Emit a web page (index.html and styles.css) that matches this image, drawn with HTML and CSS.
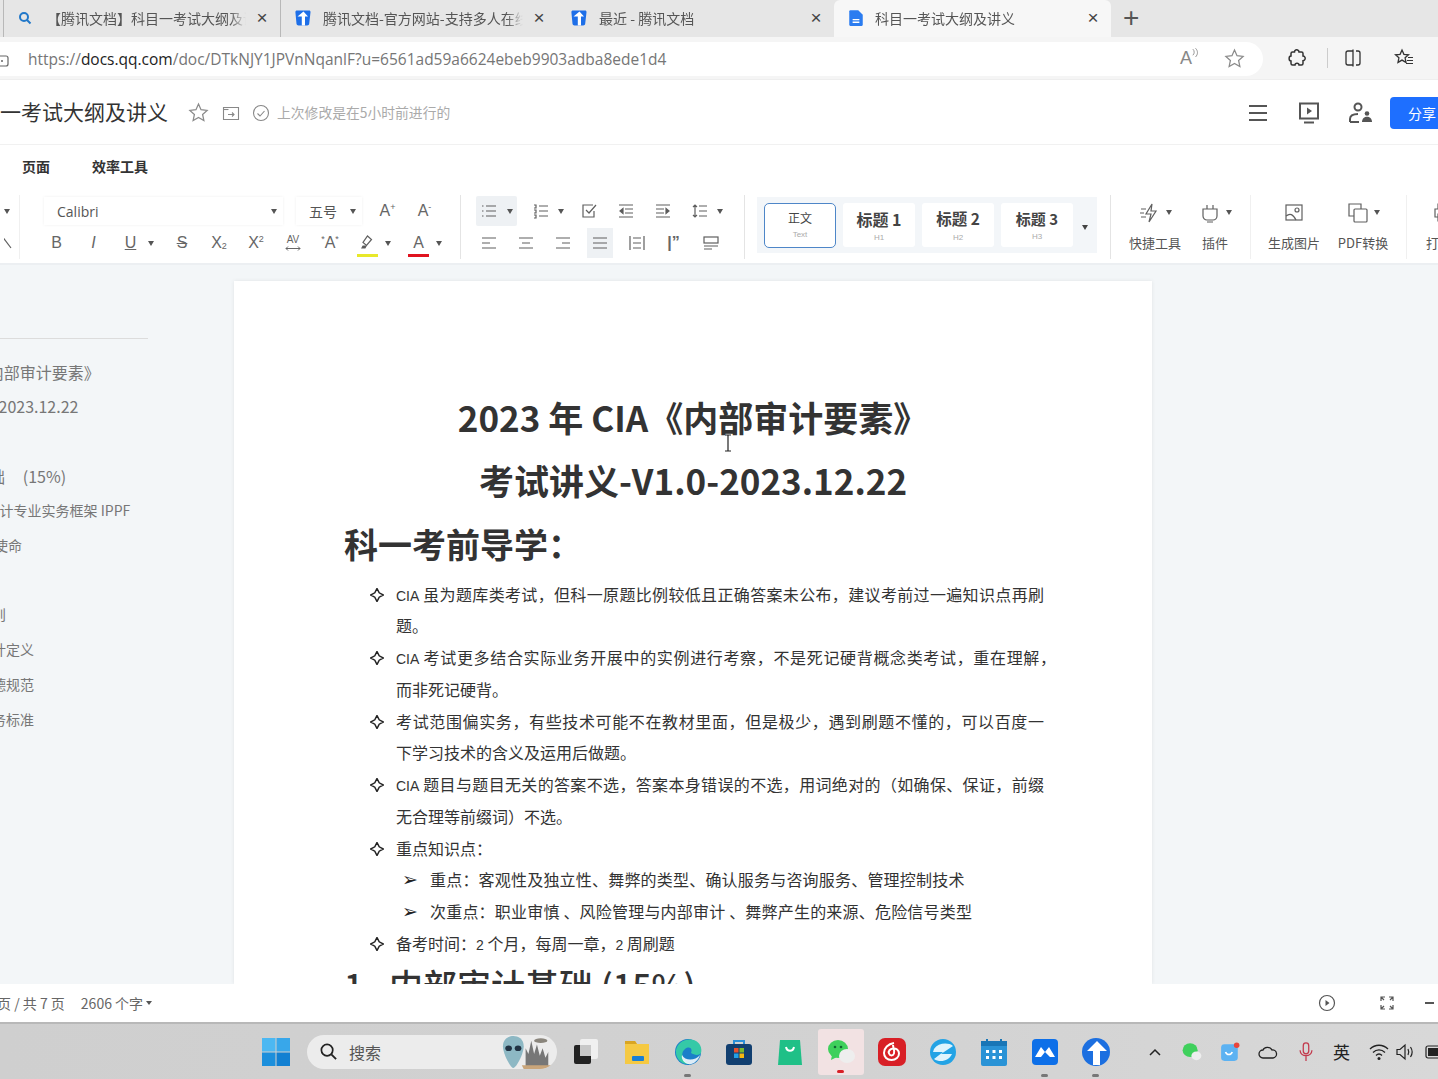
FILE: index.html
```html
<!DOCTYPE html>
<html lang="zh-CN">
<head>
<meta charset="utf-8">
<title>科目一考试大纲及讲义</title>
<link rel="stylesheet" href="styles.css">
</head>
<body>
<svg class="defs" width="0" height="0">
  <symbol id="tdoc" viewBox="0 0 18 18"><path d="M3 1.500h12c1 0 1.600.7 1.500 1.700l-1.300 11.600c-.1 1-1 1.700-2 1.700H4.500c-1 0-1.800-.7-2-1.700L1.400 3.200C1.300 2.200 2 1.500 3 1.500z" fill="#1e6fe8"/><path d="M9.500 2.500 14 7.500h-3v9H7.800V7.500H3.500z" fill="#fff"/></symbol>
  <symbol id="star" viewBox="0 0 20 20"><path d="m10 2 2.400 5.300 5.800.7-4.300 3.900 1.200 5.700-5.100-2.900-5.100 2.900 1.200-5.700L1.800 8l5.800-.7z" fill="none" stroke="currentColor" stroke-width="1.200"/></symbol>
  <symbol id="diamond" viewBox="0 0 14 14"><path d="M7 .5 9.200 4.800 13.500 7 9.200 9.200 7 13.500 4.800 9.200.5 7 4.800 4.800z" fill="none" stroke="#222" stroke-width="1.500"/></symbol>
</svg>

<header class="tabbar">
  <div class="tab first">
    <svg class="tab-ic" viewBox="0 0 16 16"><circle cx="7" cy="7" r="4" fill="none" stroke="#2278c9" stroke-width="2"/><path d="m10 10 3.500 3.500" stroke="#2278c9" stroke-width="2"/></svg>
    <span class="tab-title">【腾讯文档】科目一考试大纲及讲义</span><span class="tab-x">×</span>
  </div>
  <div class="tab">
    <svg class="tab-ic"><use href="#tdoc"/></svg>
    <span class="tab-title">腾讯文档-官方网站-支持多人在线协作</span><span class="tab-x">×</span>
  </div>
  <div class="tab plain">
    <svg class="tab-ic"><use href="#tdoc"/></svg>
    <span class="tab-title">最近 - 腾讯文档</span><span class="tab-x">×</span>
  </div>
  <div class="tab active">
    <svg class="tab-ic" viewBox="0 0 16 16"><path d="M3 1h7l4 4v9a1 1 0 0 1-1 1H3a1 1 0 0 1-1-1V2a1 1 0 0 1 1-1z" fill="#2b7cf0"/><path d="M5 9.500h6M5 11.800h6" stroke="#fff" stroke-width="1.200"/></svg>
    <span class="tab-title">科目一考试大纲及讲义</span><span class="tab-x">×</span>
  </div>
  <div class="tab-new">+</div>
</header>

<div class="addrbar">
  <div class="addr-pill">
    <svg class="lock" viewBox="0 0 12 16"><rect x="-4" y="5" width="12" height="10" rx="2" fill="none" stroke="#666" stroke-width="1.200"/><circle cx="2" cy="10" r="1" fill="#666"/></svg>
    <span class="url">https://<b>docs.qq.com</b>/doc/DTkNJY1JPVnNqanlF?u=6561ad59a6624ebeb9903adba8ede1d4</span>
    <span class="read">A<svg viewBox="0 0 8 12"><path d="M1 1c2 2 2 5 0 7M4 0c3 3 3 7 0 10" fill="none" stroke="#888"/></svg></span>
    <svg class="addr-star"><use href="#star"/></svg>
  </div>
  <div class="browser-tools">
    <svg class="bt" viewBox="0 0 20 20"><path d="M8 2.500c1.500-1.500 4-.5 4 1.500h2.500c1 0 1.500.8 1.500 1.500V8c2 0 3 2.500 1.500 4-.5.500-1 .7-1.500.7v2.800c0 .8-.7 1.500-1.500 1.500H12c0-2.500-4-2.500-4 0H5.500C4.700 17 4 16.300 4 15.500V13C1.500 13 1.500 8 4 8V5.500C4 4.700 4.700 4 5.500 4H7.500c0-.5.200-1 .5-1.500z" fill="none" stroke="#333" stroke-width="1.500"/></svg>
    <i class="bt-sep"></i>
    <svg class="bt" viewBox="0 0 20 20"><path d="M10 3H5a2 2 0 0 0-2 2v10a2 2 0 0 0 2 2h5M13 3h2a2 2 0 0 1 2 2v10a2 2 0 0 1-2 2h-2" fill="none" stroke="#333" stroke-width="1.300"/><path d="M10 1.500v17" stroke="#333" stroke-width="1.300"/></svg>
    <svg class="bt last" viewBox="0 0 20 20"><path d="m8 2 1.900 4.300 4.600.5-3.400 3 .9 4.600-4-2.300-4 2.300.9-4.600-3.400-3 4.600-.5z" fill="none" stroke="#333" stroke-width="1.300"/><path d="M14 9.500h5M13 12.500h6M12 15.500h7" stroke="#333" stroke-width="1.200"/></svg>
  </div>
</div>

<section class="dochead">
  <h1 class="doctitle">一考试大纲及讲义</h1>
  <svg class="dh-star"><use href="#star"/></svg>
  <svg class="dh-ic" viewBox="0 0 18 18"><path d="M1.500 3.500h15v12h-15z" fill="none" stroke="#888" stroke-width="1.100"/><path d="M1.500 5.500h5" stroke="#888" stroke-width="1.100"/><path d="M6 10.500h6m-2-2 2 2-2 2" fill="none" stroke="#888" stroke-width="1.100"/></svg>
  <svg class="dh-ic check" viewBox="0 0 18 18"><circle cx="9" cy="9" r="7.500" fill="none" stroke="#888" stroke-width="1.100"/><path d="m5.500 9.500 2.500 2.500 4.500-5" fill="none" stroke="#888" stroke-width="1.100"/></svg>
  <span class="saved">上次修改是在5小时前进行的</span>
  <div class="dh-right">
    <svg class="dr" viewBox="0 0 24 24"><path d="M3 5h18M3 12h18M3 19h18" stroke="#555" stroke-width="2.200"/></svg>
    <svg class="dr" viewBox="0 0 24 24"><rect x="3" y="2.500" width="18" height="15" fill="none" stroke="#555" stroke-width="2"/><path d="m10 6.500 5 3.500-5 3.500z" fill="#555"/><path d="M7 21.500h10" stroke="#555" stroke-width="2"/></svg>
    <svg class="dr" viewBox="0 0 24 24"><circle cx="10" cy="6" r="3.500" fill="none" stroke="#555" stroke-width="2"/><path d="M2 21v-3c0-3 3-5 8-5M2 21h9" fill="none" stroke="#555" stroke-width="2"/><circle cx="19" cy="12.500" r="2.300" fill="#555"/><path d="M14 21c0-7 10-7 10 0z" fill="#555"/></svg>
    <button class="share">分享</button>
  </div>
</section>

<nav class="menu"><span>页面</span><span>效率工具</span></nav>

<section class="toolbar">
  <div class="tb-group tb-cut">
    <div class="tb-row"><i class="arrow"></i></div>
    <div class="tb-row"><svg class="ic" viewBox="0 0 18 18"><path d="M-2 2 7 14"/></svg></div>
  </div>
  <div class="tb-group tb-font">
    <div class="tb-row">
      <div class="select font-sel">Calibri<i class="arrow"></i></div>
      <div class="select size-sel">五号<i class="arrow"></i></div>
      <span class="cell t first-a">A<sup>+</sup></span>
      <span class="cell t">A<sup>-</sup></span>
    </div>
    <div class="tb-row">
      <span class="cell t">B</span>
      <span class="cell t it">I</span>
      <span class="cell t ul">U</span><i class="arrow tight"></i>
      <span class="cell t st">S</span>
      <span class="cell t">X<sub>2</sub></span>
      <span class="cell t">X<sup>2</sup></span>
      <span class="cell t av">AV<svg class="av-arrow" viewBox="0 0 16 5"><path d="M1 2.500h14M3 .5l-2 2 2 2M13 .5l2 2-2 2" fill="none" stroke="#666"/></svg></span>
      <span class="cell t"><sup>*</sup>A<sup>*</sup></span>
      <span class="cell">
        <svg class="ic" viewBox="0 0 18 18"><path d="m9.500 2 4 3.500-5 6-3.500-3z"/><path d="m5 12 3 0-1 2H4z" fill="#555"/></svg>
        <i class="under yellow"></i>
      </span><i class="arrow tight"></i>
      <span class="cell t tc">A<i class="under red"></i></span><i class="arrow tight"></i>
    </div>
  </div>
  <div class="tb-group tb-para">
    <div class="tb-row">
      <span class="cell hl-wide"><svg class="ic" viewBox="0 0 18 18"><path d="M6 4h10M6 9h10M6 14h10M2 4h1.500M2 9h1.500M2 14h1.500"/></svg><i class="arrow"></i></span>
      <span class="cell"><svg class="ic" viewBox="0 0 18 18"><path d="M7 4h9M7 9h9M7 14h9M2 3h2v3H2M2 8h2v3H2M2 13h2v3H2"/></svg></span><i class="arrow tight"></i>
      <span class="cell"><svg class="ic" viewBox="0 0 18 18"><path d="M14 9v6H3V3h10"/><path d="m6 8 3 3 7-8"/></svg></span>
      <span class="cell"><svg class="ic" viewBox="0 0 18 18"><path d="M2 3h14M8 7h8M8 11h8M2 15h14"/><path d="M6 6.500 3 9l3 2.500z" fill="#555"/></svg></span>
      <span class="cell"><svg class="ic" viewBox="0 0 18 18"><path d="M2 3h14M2 7h8M2 11h8M2 15h14"/><path d="m12 6.500 3 2.500-3 2.500z" fill="#555"/></svg></span>
      <span class="cell"><svg class="ic" viewBox="0 0 18 18"><path d="M8 4h8M8 9h8M8 14h8M4 3v12M2 5l2-2 2 2M2 13l2 2 2-2"/></svg></span><i class="arrow tight"></i>
    </div>
    <div class="tb-row">
      <span class="cell"><svg class="ic" viewBox="0 0 18 18"><path d="M2 4h14M2 9h8M2 14h14"/></svg></span>
      <span class="cell"><svg class="ic" viewBox="0 0 18 18"><path d="M2 4h14M5 9h8M2 14h14"/></svg></span>
      <span class="cell"><svg class="ic" viewBox="0 0 18 18"><path d="M2 4h14M8 9h8M2 14h14"/></svg></span>
      <span class="cell hl"><svg class="ic" viewBox="0 0 18 18"><path d="M2 4h14M2 9h14M2 14h14"/></svg></span>
      <span class="cell"><svg class="ic" viewBox="0 0 18 18"><path d="M2 2v14M16 2v14M5 4h8M5 14h8M5 9h8"/></svg></span>
      <span class="cell quote">|”</span>
      <span class="cell"><svg class="ic" viewBox="0 0 18 18"><rect x="2" y="3" width="14" height="6"/><path d="M2 12h14M2 15h8"/></svg></span>
    </div>
  </div>
  <div class="styles">
    <div class="style-card sel"><b class="n">正文</b><small>Text</small></div>
    <div class="style-card"><b>标题 1</b><small>H1</small></div>
    <div class="style-card"><b class="h2">标题 2</b><small>H2</small></div>
    <div class="style-card"><b class="h3">标题 3</b><small>H3</small></div>
    <i class="arrow dark"></i>
  </div>
  <div class="tools">
    <div class="tool w-quick"><div class="tool-ic"><svg class="ic big" viewBox="0 0 22 22"><path d="M13 2 7 12h5l-2 8 7-11h-5z"/><path d="M2 7h5M1 11h4M2 15h5"/></svg><i class="arrow"></i></div><span>快捷工具</span></div>
    <div class="tool w-plug"><div class="tool-ic"><svg class="ic big" viewBox="0 0 22 22"><path d="M4 7h14v7a4 4 0 0 1-4 4H8a4 4 0 0 1-4-4zM8 3v4M14 3v4M8 20h6"/></svg><i class="arrow"></i></div><span>插件</span></div>
    <i class="tool-sep"></i>
    <div class="tool w-img"><div class="tool-ic"><svg class="ic big" viewBox="0 0 22 22"><rect x="3" y="3" width="16" height="15"/><circle cx="14" cy="8" r="2"/><path d="M3 14c4-3 7-2 10 4"/></svg></div><span>生成图片</span></div>
    <div class="tool w-pdf"><div class="tool-ic"><svg class="ic big" viewBox="0 0 22 22"><path d="M7 14H2V2h12v5"/><rect x="7" y="7" width="13" height="13" rx="1"/></svg><i class="arrow"></i></div><span>PDF转换</span></div>
    <i class="tool-sep"></i>
    <div class="tool w-print"><div class="tool-ic"><svg class="ic big" viewBox="0 0 22 22"><path d="M6 7V2h10v5M6 15H3V7h16v8h-3M6 12h10v7H6z"/></svg></div><span>打印</span></div>
  </div>
</section>

<main class="workspace">
  <aside class="outline">
    <p class="l1">2023年 CIA《内部审计要素》</p>
    <p class="l1">考试讲义-V1.0-2023.12.22</p>
    <p class="l1">科一考前导学：</p>
    <p class="l1">1. 内部审计基础&nbsp;&nbsp;&nbsp;&nbsp;&nbsp;(15%)</p>
    <p class="l2">1.1 内部审计专业实务框架 IPPF</p>
    <p class="l3">内部审计使命</p>
    <p class="l4">1.2</p>
    <p class="l4">基本原则</p>
    <p class="l4">内部审计定义</p>
    <p class="l4">职业道德规范</p>
    <p class="l4">内部实务标准</p>
  </aside>
  <article class="page">
    <h1 class="t-center">2023 年 CIA《内部审计要素》</h1>
    <h1 class="t-center">考试讲义-V1.0-2023.12.22</h1>
    <h1 class="t-left">科一考前导学：</h1>
    <ul class="points">
      <li><svg class="bul"><use href="#diamond"/></svg><div><span class="ln"><span class="lat">CIA</span> 虽为题库类考试，但科一原题比例较低且正确答案未公布，建议考前过一遍知识点再刷</span>题。</div></li>
      <li><svg class="bul"><use href="#diamond"/></svg><div><span class="ln hang"><span class="lat">CIA</span> 考试更多结合实际业务开展中的实例进行考察，不是死记硬背概念类考试，重在理解，</span>而非死记硬背。</div></li>
      <li><svg class="bul"><use href="#diamond"/></svg><div><span class="ln">考试范围偏实务，有些技术可能不在教材里面，但是极少，遇到刷题不懂的，可以百度一</span>下学习技术的含义及运用后做题。</div></li>
      <li><svg class="bul"><use href="#diamond"/></svg><div><span class="ln"><span class="lat">CIA</span> 题目与题目无关的答案不选，答案本身错误的不选，用词绝对的（如确保、保证，前缀</span>无合理等前缀词）不选。</div></li>
      <li><svg class="bul"><use href="#diamond"/></svg><div>重点知识点：</div></li>
      <li class="sub"><span class="arr">➢</span><div>重点：客观性及独立性、舞弊的类型、确认服务与咨询服务、管理控制技术</div></li>
      <li class="sub"><span class="arr">➢</span><div>次重点：职业审慎 、风险管理与内部审计 、舞弊产生的来源、危险信号类型</div></li>
      <li><svg class="bul"><use href="#diamond"/></svg><div>备考时间：<span class="lat">2</span> 个月，每周一章，<span class="lat">2</span> 周刷题</div></li>
    </ul>
    <h2 class="sec"><span class="sec-no">1</span>内部审计基础 (15%)</h2>
  </article>
  <svg class="ibeam" viewBox="0 0 10 18"><path d="M2 1h6M5 1v16M2 17h6" fill="none" stroke="#222" stroke-width="1.200"/></svg>
</main>

<footer class="status">
  <span class="pg">第 1 页 / 共 7 页</span>
  <span class="wc">2606 个字<i class="arrow small"></i></span>
  <div class="st-right">
    <svg class="st-ic" viewBox="0 0 18 18"><circle cx="9" cy="9" r="7.500" fill="none" stroke="#555" stroke-width="1.200"/><path d="m7.500 6 4 3-4 3z" fill="#555"/></svg>
    <svg class="st-ic" viewBox="0 0 18 18"><path d="M3 7V3h4M3 3l3 3M15 7V3h-4M15 3l-3 3M3 11v4h4M3 15l3-3M15 11v4h-4M15 15l-3-3" fill="none" stroke="#555" stroke-width="1.200"/></svg>
    <span class="minus"></span>
  </div>
</footer>

<div class="taskbar">
  <div class="tk-apps">
    <span class="tk"><svg class="tki" viewBox="0 0 28 28"><rect width="13.500" height="13.500" fill="#4cb8f2"/><rect x="14.500" width="13.500" height="13.500" fill="#38a7ea"/><rect y="14.500" width="13.500" height="13.500" fill="#1c8fdc"/><rect x="14.500" y="14.500" width="13.500" height="13.500" fill="#1280d2"/></svg></span>
    <div class="search">
      <svg class="s-ic" viewBox="0 0 20 20"><circle cx="8.500" cy="8.500" r="6" fill="none" stroke="#222" stroke-width="1.800"/><path d="m13 13 5 5" stroke="#222" stroke-width="2"/></svg>
      <span>搜索</span>
      <svg class="alien" viewBox="0 0 56 36"><path d="M26 34V14l3 6 3-14 3 14 3-10 3 12 3-8 3 10 3-6v16z" fill="#777"/><path d="M22 32h32c-3 3-6 4-10 4H24z" fill="#c9a57a"/><ellipse cx="42" cy="6" rx="7" ry="2.500" fill="#8a857c"/><path d="M2 12C2 4 8 1 13 1s11 3 11 11c0 8-8 23-11 23S2 20 2 12z" fill="#8db8c4"/><ellipse cx="8" cy="14" rx="3.500" ry="3" fill="#234"/><ellipse cx="18" cy="14" rx="3.500" ry="3" fill="#234"/></svg>
    </div>
    <span class="tk"><svg class="tki" viewBox="0 0 28 28"><rect x="8" y="1" width="18" height="20" rx="2" fill="#f0f0f0"/><rect x="2" y="7" width="17" height="19" rx="2" fill="#222"/><rect x="8" y="7" width="11" height="11" fill="#c8c8c8"/></svg></span>
    <span class="tk"><svg class="tki" viewBox="0 0 28 28"><path d="M2 3h10l2 3h12v20H2z" fill="#f5c943"/><path d="M2 3h10l2 3H2z" fill="#d9a522"/><rect x="9" y="18" width="12" height="5" rx="1" fill="#1a7fd4"/></svg></span>
    <span class="tk dot"><svg class="tki" viewBox="0 0 28 28"><circle cx="14" cy="14" r="13" fill="#1b7fc9"/><path d="M2 12C4 3 14-1 22 3c5 3 6 8 5 12-2 3-7 2-10 0 2-5-2-7-6-4-5 4-3 12 5 15C7 27 1 20 2 12z" fill="#35c9a7"/><path d="M26 17c-2 6-7 10-12 9-4-1-7-5-6-9 3 6 13 6 18 0z" fill="#fff" opacity=".85"/></svg></span>
    <span class="tk"><svg class="tki" viewBox="0 0 28 28"><path d="M9 6V3h10v3" fill="none" stroke="#2b8fd8" stroke-width="2"/><rect x="1" y="6" width="26" height="21" rx="3" fill="#123f70"/><rect x="9" y="10" width="4.500" height="4.500" fill="#e8502c"/><rect x="14.500" y="10" width="4.500" height="4.500" fill="#7cb92e"/><rect x="9" y="15.500" width="4.500" height="4.500" fill="#22a0e6"/><rect x="14.500" y="15.500" width="4.500" height="4.500" fill="#f7b80f"/></svg></span>
    <span class="tk"><svg class="tki" viewBox="0 0 28 28"><path d="M4 2h20l2 25H2z" fill="#1fc087"/><path d="M10 9c1 5 7 5 8 0" fill="none" stroke="#fff" stroke-width="2"/></svg></span>
    <span class="tk wechat"><svg class="tki" viewBox="0 0 28 28"><ellipse cx="11" cy="11" rx="10" ry="9" fill="#3fd05c"/><path d="m5 17-1 5 6-3z" fill="#3fd05c"/><ellipse cx="20" cy="18" rx="8" ry="7" fill="#eee"/><circle cx="8" cy="9" r="1.300" fill="#163"/><circle cx="14" cy="9" r="1.300" fill="#163"/></svg></span>
    <span class="tk"><svg class="tki" viewBox="0 0 28 28"><rect x="0" y="0" width="28" height="28" rx="7" fill="#d81f26"/><path d="M16 5c-6 1-10 5-10 10 0 4 3 7 7.500 7s7.500-3 7.500-6.500S18 10 15 10.500 10 13 11 15.500 15 18 16 15.500 15 9 15 7" fill="none" stroke="#fff" stroke-width="2"/></svg></span>
    <span class="tk"><svg class="tki" viewBox="0 0 28 28"><circle cx="14" cy="14" r="13" fill="#23a3e5"/><path d="M5 11c4-6 14-7 19-3l-12 8h11c-3 7-12 9-18 5l9-7H4z" fill="#dff4fd"/></svg></span>
    <span class="tk"><svg class="tki" viewBox="0 0 28 28"><rect x="1" y="3" width="26" height="25" rx="2" fill="#2a93d6"/><rect x="1" y="3" width="26" height="5" fill="#1976b6"/><path d="M7 1v5M21 1v5" stroke="#1976b6" stroke-width="2"/><path d="M6 12h3v3H6zM12.500 12h3v3h-3zM19 12h3v3h-3zM6 18h3v3H6zM12.500 18h3v3h-3zM19 18h3v3h-3z" fill="#fff"/></svg></span>
    <span class="tk dot"><svg class="tki" viewBox="0 0 28 28"><rect x="1" y="1" width="26" height="26" rx="4" fill="#0d6fe8"/><path d="M4 19 10 9l4 5 4-5 6 10h-5l-5-5-4 5z" fill="#fff"/></svg></span>
    <span class="tk dot"><svg class="tki" viewBox="0 0 28 28"><circle cx="14" cy="14" r="14" fill="#1c6fe0"/><path d="M15 3 25 13h-7v14h-7V13H5z" fill="#fff"/></svg></span>
  </div>
  <div class="tray">
    <svg class="tr chev" viewBox="0 0 14 14"><path d="m2 10 5-5 5 5" fill="none" stroke="#222" stroke-width="1.500"/></svg>
    <svg class="tr" viewBox="0 0 16 16"><ellipse cx="6.500" cy="6.500" rx="6" ry="5.500" fill="#3fd05c"/><ellipse cx="11.500" cy="11" rx="4" ry="3.500" fill="#eee"/></svg>
    <svg class="tr" viewBox="0 0 18 18"><rect x="1" y="2" width="15" height="15" rx="3" fill="#5cb2f2"/><path d="M5 9c1 3 5 3 6 0" fill="none" stroke="#fff" stroke-width="1.500"/><circle cx="15" cy="3" r="2.500" fill="#e8453c"/></svg>
    <svg class="tr" viewBox="0 0 20 20"><path d="M5 16a4 4 0 0 1 0-8c1-3 7-4 9 0a4 4 0 0 1 1 8z" fill="none" stroke="#222" stroke-width="1.300"/></svg>
    <svg class="tr" viewBox="0 0 18 22"><rect x="6" y="1" width="6" height="12" rx="3" fill="none" stroke="#c33a4d" stroke-width="1.400"/><path d="M2.500 9c0 8 13 8 13 0M9 15v6" fill="none" stroke="#c33a4d" stroke-width="1.400"/></svg>
    <span class="ime">英</span>
    <svg class="tr" viewBox="0 0 20 20"><path d="M1 7c5-5 13-5 18 0M4 10.500c3.500-3.500 8.500-3.500 12 0M7 13.500c2-2 4-2 6 0" fill="none" stroke="#222" stroke-width="1.300"/><circle cx="10" cy="16.500" r="1.500" fill="#222"/></svg>
    <svg class="tr" viewBox="0 0 20 20"><path d="M2 7.500h3L10 3v14l-5-4.500H2z" fill="none" stroke="#222" stroke-width="1.200"/><path d="M13 7c1 2 1 4 0 6M15.500 5c2 3 2 7 0 10" fill="none" stroke="#222" stroke-width="1.200"/></svg>
    <svg class="tr batt" viewBox="0 0 20 14"><rect x="1" y="1" width="18" height="12" rx="2" fill="none" stroke="#222" stroke-width="1.200"/><rect x="3" y="3" width="14" height="8" fill="#222"/></svg>
  </div>
</div>
</body>
</html>
```

FILE: styles.css
```css
* { box-sizing: border-box; }
html, body { margin: 0; height: 100%; }
body {
  width: 1438px; height: 1079px; overflow: hidden;
  display: flex; flex-direction: column;
  font-family: "Noto Sans CJK SC", "Noto Sans", sans-serif;
  color: #333; background: #fff;
}
.defs { position: absolute; }

/* tabs */
.tabbar { flex: 0 0 37px; display: flex; align-items: stretch; background: #e6e6e6; padding-left: 3px; }
.tab { width: 277px; display: flex; align-items: center; padding: 0 9px 2px 13px; border-left: 1px solid #b8b8b8; font-size: 14px; color: #555; }
.tab.first .tab-ic { margin-left: 0; margin-right: 14px; width: 16px; height: 16px; }
.tab.first { padding-left: 13px; }
.tab.plain { border-left-color: transparent; padding-left: 12px; }
.tab.active { background: #f7f7f7; border-left: 0; border-radius: 6px 6px 0 0; padding-left: 13px; }
.tab-ic { width: 18px; height: 18px; margin: 0 11px 0 0; flex: none; }
.tab.active .tab-ic { margin-right: 10px; }
.tab-title { flex: 1; min-width: 0; white-space: nowrap; overflow: hidden; -webkit-mask-image: linear-gradient(90deg, #000 92%, transparent); mask-image: linear-gradient(90deg, #000 92%, transparent); }
.tab-x { font-family: "Liberation Sans", sans-serif; font-size: 19px; width: 18px; text-align: center; color: #444; margin-left: 7px; }
.tab-new { font-family: "Liberation Sans", sans-serif; font-size: 28px; font-weight: 300; color: #555; margin-left: 12px; line-height: 36px; }

/* address */
.addrbar { flex: 0 0 43px; display: flex; align-items: center; background: #f5f5f5; border-bottom: 1px solid #eee; }
.addr-pill { width: 1263px; height: 34px; margin-top: 1px; background: #fff; border-radius: 0 17px 17px 0; display: flex; align-items: center; }
.lock { width: 12px; height: 16px; margin-right: 16px; }
.url { font-family: "Open Sans", sans-serif; font-size: 15.500px; color: #767676; flex: 1; white-space: nowrap; }
.url b { font-weight: 400; color: #222; }
.read { font-family: "Liberation Sans", sans-serif; font-size: 18px; color: #888; display: flex; margin-right: 25px; }
.read svg { width: 7px; height: 11px; }
.addr-star { width: 21px; height: 21px; color: #8a8a8a; margin-right: 18px; }
.browser-tools { flex: 1; display: flex; align-items: center; padding-left: 24px; }
.bt { width: 20px; height: 20px; }
.bt-sep { width: 1px; height: 20px; background: #ccc; margin: 0 15px 0 20px; }
.bt.last { margin-left: 31px; }

/* doc head */
.dochead { flex: 0 0 65px; display: flex; align-items: center; padding: 1px 0 0 0; background: #fff; border-bottom: 1px solid #f1f1f1; }
.doctitle { margin: -3px 0 0; font-size: 21px; font-weight: 400; color: #333; white-space: nowrap; width: 188px; flex: none; }
.dh-star { width: 21px; height: 21px; color: #8a8a8a; }
.dh-ic { width: 18px; height: 18px; margin-left: 13px; }
.dh-ic.check { margin-left: 12px; }
.saved { font-size: 13.800px; color: #aaa; margin: -2px 0 0 7px; white-space: nowrap; }
.dh-right { margin-left: auto; display: flex; align-items: center; }
.dr { width: 24px; height: 24px; margin-right: 27px; }
.dr:last-of-type { margin-right: 18px; }
.share { width: 58px; height: 32px; margin-right: -10px; padding: 0 12px 0 0; background: #1e6fff; border: 0; border-radius: 4px; color: #fff; font: 14px "Noto Sans CJK SC", sans-serif; text-align: right; }

/* menu */
.menu { flex: 0 0 42px; display: flex; align-items: center; padding-left: 22px; gap: 42px; font-size: 14px; font-weight: 700; color: #333; background: #fff; }

/* toolbar */
.toolbar { flex: 0 0 78px; display: flex; align-items: flex-start; background: #fff; padding-top: 8px; border-bottom: 2px solid #eceff2; }
.tb-group { display: flex; flex-direction: column; height: 64px; flex: none; }
.tb-row { height: 32px; display: flex; align-items: center; }
.tb-cut { width: 20px; padding-left: 4px; border-right: 1px solid #f0f0f0; }
.tb-font { width: 441px; padding-left: 18px; border-right: 1px solid #e4e4e4; }
.tb-font .tb-row:first-child { padding-left: 6px; }
.tb-para { width: 284px; padding-left: 9px; border-right: 1px solid #e4e4e4; }
.select { height: 28px; flex: none; display: flex; align-items: center; justify-content: space-between; font-size: 14px; color: #555; box-shadow: 0 0 3px #f0f0f0; padding: 0 6px 0 13px; }
.font-sel { width: 239px; font-family: "Open Sans", sans-serif; }
.size-sel { width: 66px; margin-left: 13px; }
.cell { width: 37px; height: 30px; flex: none; display: inline-flex; align-items: center; justify-content: center; position: relative; color: #666; }
.t { font-family: "Liberation Sans", sans-serif; font-size: 16px; }
.t sup, .t sub { font-size: 9px; line-height: 1; }
.t sup { align-self: flex-start; margin-top: 7px; }
.t sub { align-self: flex-end; margin-bottom: 7px; }
.first-a { margin-left: 7px; }
.it { font-style: italic; }
.ul { text-decoration: underline; }
.st { text-decoration: line-through; }
.av { font-size: 10px; flex-direction: column; line-height: 1; }
.av-arrow { width: 16px; height: 5px; margin-top: 1px; }
.hl { background: #eef1f4; width: 26px; margin: 0 5.500px; }
.hl-wide { background: #eef1f4; border-radius: 2px; width: 41px; margin: 0 5.500px 0 6px; padding-left: 4px; justify-content: flex-start; gap: 8.500px; }
.under { position: absolute; left: 8px; right: 8px; bottom: 1px; height: 3px; }
.under.yellow { background: #e8e82a; }
.under.red { background: #e0131f; }
.quote { font-family: "Liberation Sans", sans-serif; font-size: 16px; font-weight: 700; }
.ic { width: 18px; height: 18px; flex: none; fill: none; stroke: #5f5f5f; stroke-width: 1.200; overflow: hidden; }
.ic.big { width: 22px; height: 22px; }
.arrow { display: inline-block; width: 0; height: 0; border-left: 3.500px solid transparent; border-right: 3.500px solid transparent; border-top: 5px solid #555; flex: none; }
.arrow.tight { margin: 0 9.500px 0 -1px; }
.tb-para .arrow.tight { margin: 0 7px 0 -2px; }
.arrow.small { margin-left: 3px; border-top-width: 4px; border-left-width: 3px; border-right-width: 3px; }
.arrow.dark { border-top-color: #444; align-self: center; margin: -2px 0 0 2px; }

/* style cards */
.styles { width: 340px; height: 56px; flex: none; margin: 2px 0 0 12px; padding: 6px 0 0 7px; background: #f3f6f9; display: flex; align-items: flex-start; gap: 7px; }
.style-card { width: 72px; height: 44px; background: #fff; border-radius: 3px; display: flex; flex-direction: column; align-items: center; padding-top: 8px; line-height: 1; }
.style-card.sel { height: 45px; border: 1px solid #4e86c8; border-radius: 5px; }
.style-card b { font-size: 16px; font-weight: 700; color: #444; white-space: nowrap; }
.style-card b.h2 { font-size: 15.500px; }
.style-card b.h3 { font-size: 15px; }
.style-card b.n { font-size: 12px; font-weight: 400; }
.style-card small { font: 8px "Liberation Sans", sans-serif; color: #aaa; margin-top: 6px; }

/* tools */
.tools { flex: 1; min-width: 0; display: flex; margin-left: 13px; height: 64px; border-left: 1px solid #e4e4e4; }
.tool { display: flex; flex-direction: column; align-items: center; font-size: 13px; color: #555; white-space: nowrap; flex: none; }
.tool-ic { height: 32px; padding-top: 3px; display: flex; align-items: center; gap: 5px; }
.tool span { line-height: 32px; }
.w-quick { width: 76px; margin-left: 6px; }
.w-plug { width: 44px; }
.tool-sep { width: 1px; background: #f0f0f0; margin: 0 0 0 13px; flex: none; }
.w-img { width: 58px; margin-left: 14px; }
.w-pdf { width: 60px; margin-left: 10px; }
.w-print { width: 26px; margin-left: 19px; align-items: flex-start; }
.w-print .tool-ic { margin-left: 6px; }

/* workspace */
.workspace { flex: 1; min-height: 0; background: #f3f6f8; display: flex; overflow: hidden; position: relative; }
.outline { width: 234px; flex: none; padding-top: 89.500px; position: relative; font-size: 14px; color: #777; overflow: hidden; }
.outline::before { content: ""; position: absolute; left: 0; top: 73px; width: 148px; height: 1px; background: #dcdcdc; }
.outline p { margin: 0 0 0 -108px; line-height: 34.700px; white-space: nowrap; }
.outline .l1 { font-size: 16px; }
.outline .l2 { padding-left: 43px; }
.outline .l3 { padding-left: 46px; }
.outline .l4 { padding-left: 58px; }
.page { width: 918px; flex: none; margin-top: 16px; padding: 104px 110px 0; background: #fff; box-shadow: 0 0 4px rgba(0,0,0,.08); color: #333; }
.page h1 { margin: 0; font-size: 34px; font-weight: 700; line-height: 63px; white-space: nowrap; }
.page h1.t-center { font-size: 35px; text-align: center; }
.page h1.t-left { margin-top: 1px; }
.points { list-style: none; margin: 3.500px -20px 0 0; padding: 0 0 0 26px; font-size: 16px; line-height: 31.750px; }
.points li { display: flex; }
.ln { display: block; width: 648px; text-align: justify; text-align-last: justify; white-space: nowrap; }
.ln.hang { width: 660px; }
.lat { font-family: "Liberation Sans", sans-serif; font-size: 14px; line-height: 1; }
.bul { width: 14px; height: 14px; margin: 9px 12px 0 0; flex: none; }
.points li.sub { padding-left: 32px; letter-spacing: .2px; }
.arr { font-family: "DejaVu Sans", sans-serif; font-size: 19px; line-height: 31.750px; height: 31.750px; width: 28px; flex: none; color: #222; }
.sec { margin: -7px 0 0; font-size: 34px; font-weight: 500; line-height: 63px; white-space: nowrap; }
.sec-no { display: inline-block; width: 45px; }
.ibeam { position: absolute; left: 723px; top: 169px; width: 10px; height: 18px; }

/* status */
.status { flex: 0 0 38px; display: flex; align-items: center; background: #fff; font-size: 14px; color: #666; overflow: hidden; }
.pg { margin-left: -31px; white-space: nowrap; }
.wc { margin-left: 16px; white-space: nowrap; display: flex; align-items: center; }
.st-right { margin-left: auto; display: flex; align-items: center; }
.st-ic { width: 18px; height: 18px; margin-right: 42px; }
.st-ic + .st-ic { margin-right: 29px; }
.minus { width: 9px; height: 2px; background: #555; margin-right: 4px; }

/* taskbar */
.taskbar { flex: 0 0 57px; display: flex; align-items: center; background: linear-gradient(90deg, #cfcfcf, #d2d2d2 60%, #d8d8d8); border-top: 2px solid #b8b8b8; position: relative; }
.tk-apps { display: flex; align-items: center; margin-left: 250.500px; height: 100%; }
.tk { width: 51px; height: 100%; display: flex; align-items: center; justify-content: center; position: relative; flex: none; }
.tki { width: 28px; height: 28px; }
.tk.dot::after, .tk.wechat::after { content: ""; position: absolute; bottom: 2px; left: 50%; width: 7px; height: 3px; margin-left: -3.500px; border-radius: 2px; background: #777; }
.tk.wechat { background: #f2e2e3; width: 46px; margin: 0 2.500px; height: 46px; border-radius: 3px; }
.tk.wechat::after { background: #d81f26; bottom: 2px; }
.search { width: 250px; height: 34px; margin: 0 3px 0 5.500px; flex: none; border-radius: 17px; background: #ececec; display: flex; align-items: center; padding-left: 12px; font-size: 16px; color: #555; overflow: hidden; position: relative; }
.s-ic { width: 19px; height: 19px; margin-right: 11px; }
.alien { position: absolute; right: 2px; top: 0; width: 55px; height: 34px; }
.tray { margin-left: auto; display: flex; align-items: center; width: 290px; flex: none; }
.tr { width: 20px; height: 20px; flex: none; margin-right: 18px; }
.chev { width: 14px; height: 14px; margin-right: 20px; }
.tray .tr:nth-child(5) { margin-right: 17px; }
.ime { font-size: 17px; color: #222; margin-right: 19px; flex: none; }
.tray .tr:nth-child(7) { margin-right: 6px; }
.batt { margin-left: -8px; margin-right: 0; }
```
